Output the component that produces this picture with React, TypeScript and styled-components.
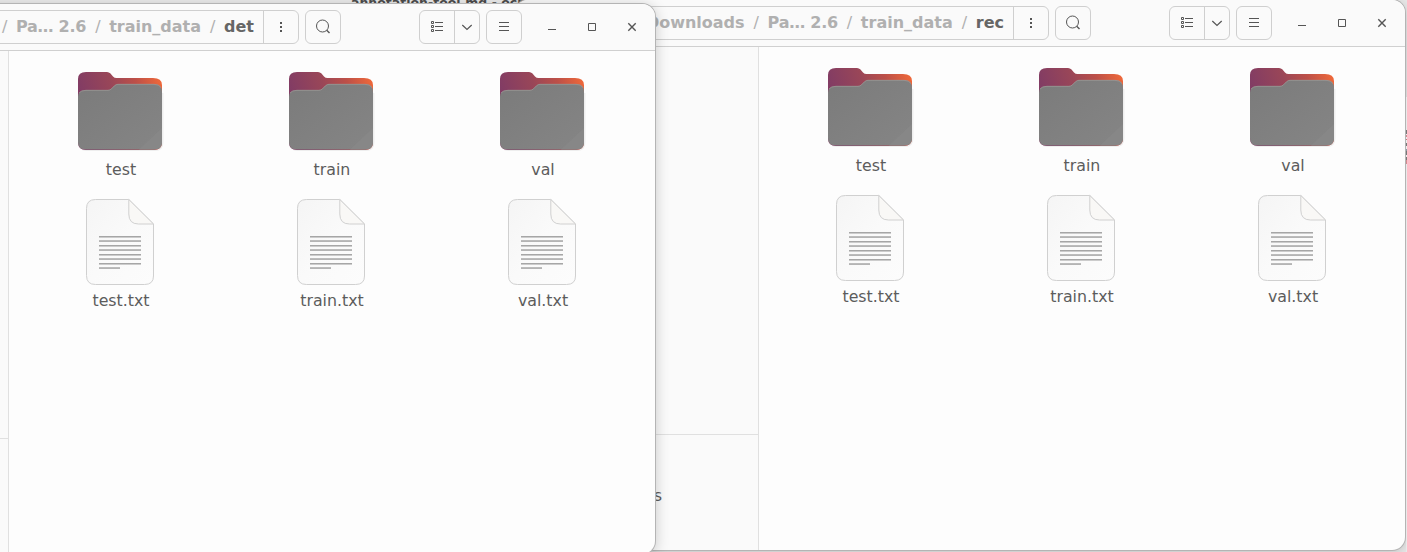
import React from "react";
import styled, { createGlobalStyle } from "styled-components";

const Global = createGlobalStyle`
  * { box-sizing: border-box; }
  body { margin: 0; background: #ececec; }
`;

const Desktop = styled.main`
  position: relative;
  width: 1407px;
  height: 552px;
  overflow: hidden;
  background: #ececec;
  font: 16px/19px "DejaVu Sans", sans-serif;
  color: #5c5c5c;
`;

const BackgroundTitle = styled.div`
  position: absolute;
  left: 351px;
  top: -5px;
  font-size: 12.5px;
  line-height: 15px;
  font-weight: bold;
  color: #4c4c4c;
  white-space: nowrap;
`;

const BackgroundEdge = styled.div`
  position: absolute;
  left: 1406px;
  top: 97px;
  width: 1px;
  height: 455px;
  background: linear-gradient(
    #e9e9e9 0 33px, #777 33px 37px, #eee 37px 38px, #d08a90 38px 40px, #eee 40px 42px,
    #c9737b 42px 43px, #eee 43px 46px, #777 46px 49px, #eee 49px 52px, #8d9aa6 52px 54px,
    #777 54px 58px, #eee 58px 60px, #777 60px 63px, #d08a90 63px 67px, #e9e9e9 67px
  );
`;

const WindowFrame = styled.section<{ $right: number; $top: number }>`
  position: absolute;
  left: ${(p) => p.$right - 890}px;
  top: ${(p) => p.$top}px;
  width: 890px;
  height: 550px;
  display: flex;
  flex-direction: column;
  border-radius: 13px;
  overflow: hidden;
  background: #fdfdfd;
  box-shadow: 0 0 0 1px #b4b4b4, 0 2px 14px 1px rgba(0, 0, 0, 0.2);
`;

const Header = styled.header`
  flex: none;
  height: 47px;
  display: flex;
  justify-content: flex-end;
  align-items: flex-start;
  padding-top: 6px;
  background: #fafafa;
  border-bottom: 1px solid #d0d0d0;
`;

const ControlGroup = styled.div<{ $after: number }>`
  flex: none;
  display: flex;
  height: 34px;
  margin-right: ${(p) => p.$after}px;
  border: 1px solid #cfcfcf;
  border-radius: 6px;
  background: #fafafa;
`;

const Control = styled.button<{ $width: number; $divided?: boolean }>`
  width: ${(p) => p.$width}px;
  padding: 0;
  border: 0;
  border-left: ${(p) => (p.$divided ? "1px solid #cfcfcf" : "0")};
  background: none;
  display: flex;
  align-items: center;
  justify-content: center;
`;

const Breadcrumbs = styled.nav`
  display: flex;
  align-items: center;
  justify-content: flex-end;
  padding: 0 9px 2px 0;
  white-space: nowrap;
  color: #b0b0b0;
`;

const Crumb = styled.span<{ $current?: boolean; $shortened?: boolean }>`
  font-weight: bold;
  letter-spacing: ${(p) => (p.$shortened ? "-0.25px" : "normal")};
  color: ${(p) => (p.$current ? "#666" : "#b0b0b0")};
`;

const Slash = styled.span`
  width: 5px;
  margin: 0 9px;
`;

const Caption = styled.div`
  display: flex;
  height: 34px;
  padding-right: 3px;
`;

const Body = styled.div`
  flex: 1;
  display: flex;
  min-height: 0;
`;

const Sidebar = styled.aside`
  width: 244px;
  display: flex;
  flex-direction: column;
  background: #fafafa;
  border-right: 1px solid #e0e0e0;
`;

const Places = styled.div`
  height: 388px;
  border-bottom: 1px solid #e0e0e0;
`;

const Place = styled.div`
  margin-top: 51px;
  padding-right: 96px;
  text-align: right;
  white-space: nowrap;
`;

const FileGrid = styled.div`
  display: grid;
  grid-template-columns: repeat(3, 211px);
  grid-auto-rows: 131px;
  align-content: start;
  padding: 12px 0 0 6px;
`;

const FileItem = styled.div`
  display: flex;
  flex-direction: column;
  align-items: center;
  svg { display: block; margin-bottom: 1px; }
`;

const FileName = styled.span`
  padding-left: 1px;
  font-size: 15.8px;
`;

const Glyph = ({ children }: { children: React.ReactNode }) => (
  <svg width="16" height="16" viewBox="0 0 16 16" fill="none" stroke="#555" strokeWidth="1">
    {children}
  </svg>
);

const FolderIcon = () => (
  <svg width="97" height="96" viewBox="0 0 97 96">
    <defs>
      <linearGradient id="folder-back" gradientUnits="userSpaceOnUse" x1="10" y1="34" x2="86" y2="9">
        <stop offset="0" stopColor="#823c64" />
        <stop offset="0.4" stopColor="#994658" />
        <stop offset="0.7" stopColor="#bd5048" />
        <stop offset="1" stopColor="#ee683a" />
      </linearGradient>
      <linearGradient id="folder-front" x1="0" y1="0" x2="1" y2="1">
        <stop offset="0" stopColor="#7b7b7b" />
        <stop offset="1" stopColor="#858585" />
      </linearGradient>
    </defs>
    <path d="M7 17V80Q7 88 14 88H83Q91.5 88 91.5 79V30Z" fill="#000" opacity=".06" />
    <path d="M6 16Q6 9 14 9H35Q37 9 38.5 10.5L41 13.5Q42.5 15 44.5 15H81Q90 15 90 22V79Q90 87 82 87H14Q6 87 6 79Z" fill="url(#folder-back)" />
    <path d="M6 34Q6 27 14 27H36Q38 27 39.5 25.5L42.5 22.5Q44 21 46 21H82Q90 21 90 29V79Q90 86.5 82 86.5H14Q6 86.5 6 79Z" fill="url(#folder-front)" />
    <path d="M7 30Q9 27.3 14 27.3H36Q38 27.3 39.5 25.8L42.5 22.8Q44 21.3 46 21.3H82Q87 21.3 89 24.5" fill="none" stroke="#a09c99" strokeWidth=".7" />
    <path d="M67 86.5L90 65V79Q90 86.5 82 86.5Z" fill="#878787" />
  </svg>
);

const TextFileIcon = () => (
  <svg width="97" height="96" viewBox="0 0 97 96">
    <defs>
      <linearGradient id="paper" x1="0" y1="0" x2="1" y2="1">
        <stop offset="0" stopColor="#f5f5f5" />
        <stop offset="0.5" stopColor="#fafafa" />
        <stop offset="1" stopColor="#fcfcfc" />
      </linearGradient>
    </defs>
    <path d="M14.5 14.5Q14.5 5.5 23.5 5.5H56.8L81.5 30V82Q81.5 90.5 72.5 90.5H23.5Q14.5 90.5 14.5 81.5Z" fill="url(#paper)" stroke="#d0d0d0" />
    <path d="M56.8 5.5V20Q56.8 30 66.5 30H81.5Z" fill="#f9f8f6" stroke="#d0d0d0" strokeLinejoin="round" />
    {[42, 46, 51, 55, 60, 64, 69, 73].map((y, i) => (
      <React.Fragment key={y}>
        <rect x="27" y={y} width={i === 7 ? 21 : 42} height="1" fill={i % 2 ? "#bcbcbc" : "#a6a6a6"} />
        <rect x="27" y={y + 1} width={i === 7 ? 21 : 42} height="1" fill={i % 2 ? "#b4b4b4" : "#cccccc"} />
      </React.Fragment>
    ))}
  </svg>
);

const folders = ["test", "train", "val"];

type FileWindowProps = { right: number; top: number; path: string[]; place?: string };

function FileWindow({ right, top, path, place }: FileWindowProps) {
  return (
    <WindowFrame $right={right} $top={top}>
      <Header>
        <ControlGroup $after={6}>
          <Breadcrumbs>
            {path.map((name, i) => (
              <React.Fragment key={name}>
                {i > 0 && <Slash>/</Slash>}
                <Crumb $current={i === path.length - 1} $shortened={name.includes("…")}>{name}</Crumb>
              </React.Fragment>
            ))}
          </Breadcrumbs>
          <Control $width={35} $divided aria-label="Path menu">
            <Glyph><path d="M7 3h2v2H7zM7 7h2v2H7zM7 11h2v2H7z" fill="#555" stroke="none" /></Glyph>
          </Control>
        </ControlGroup>
        <ControlGroup $after={78}>
          <Control $width={34} aria-label="Search">
            <Glyph><circle cx="7.5" cy="7" r="6" /><path d="M11.7 11.2L14.5 14" strokeWidth="1.4" /></Glyph>
          </Control>
        </ControlGroup>
        <ControlGroup $after={6}>
          <Control $width={34} aria-label="List view">
            <Glyph><path d="M2.5 2.5h2v2h-2zM2.5 6.5h2v2h-2zM2.5 10.5h2v2h-2zM6 3.5h8M6 7.5h8M6 11.5h8" /></Glyph>
          </Control>
          <Control $width={25} $divided aria-label="View options">
            <Glyph><path d="M3.3 6L8 10.5L12.7 6" strokeWidth="1.2" /></Glyph>
          </Control>
        </ControlGroup>
        <ControlGroup $after={10}>
          <Control $width={34} aria-label="Menu">
            <Glyph><path d="M3 3.5h10M3 7.5h10M3 11.5h10" /></Glyph>
          </Control>
        </ControlGroup>
        <Caption>
          <Control $width={40} aria-label="Minimize"><Glyph><path d="M4 10.5h8" /></Glyph></Control>
          <Control $width={40} aria-label="Maximize"><Glyph><path d="M4.5 4.5h7v7h-7z" /></Glyph></Control>
          <Control $width={40} aria-label="Close"><Glyph><path d="M4.3 4.3l7.4 7.4M11.7 4.3l-7.4 7.4" strokeWidth="1.4" /></Glyph></Control>
        </Caption>
      </Header>
      <Body>
        <Sidebar>
          <Places />
          {place && <Place>{place}</Place>}
        </Sidebar>
        <FileGrid>
          {folders.map((name) => (
            <FileItem key={name}><FolderIcon /><FileName>{name}</FileName></FileItem>
          ))}
          {folders.map((name) => (
            <FileItem key={name + ".txt"}><TextFileIcon /><FileName>{name}.txt</FileName></FileItem>
          ))}
        </FileGrid>
      </Body>
    </WindowFrame>
  );
}

export default function App() {
  return (
    <Desktop>
      <Global />
      <BackgroundTitle>annotation-tool.md - ocr</BackgroundTitle>
      <FileWindow right={1405} top={0} path={["Downloads", "Pa… 2.6", "train_data", "rec"]} place="Other Locations" />
      <BackgroundEdge />
      <FileWindow right={655} top={4} path={["Downloads", "Pa… 2.6", "train_data", "det"]} />
    </Desktop>
  );
}
